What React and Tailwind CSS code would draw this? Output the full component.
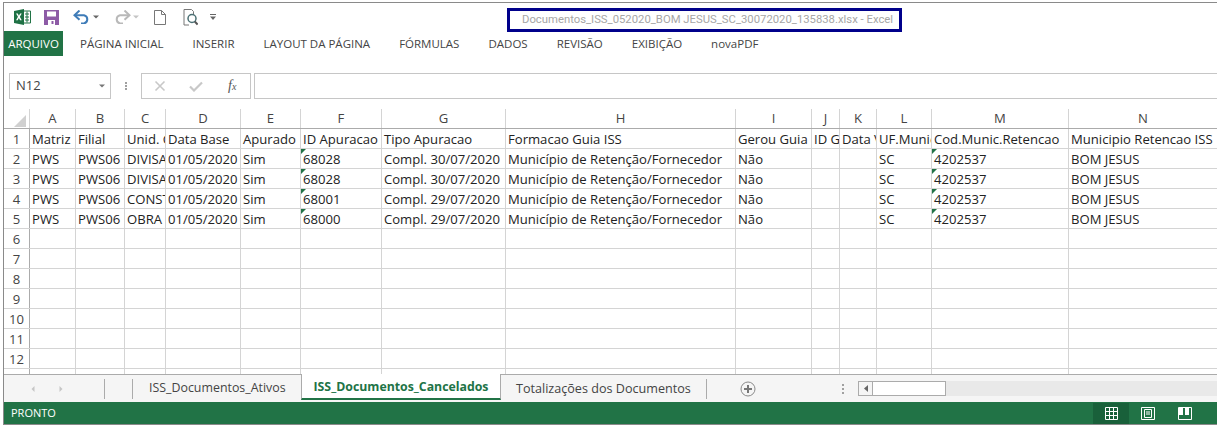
import React from 'react';

const columns = [
  { name: 'A', width: 'w-[46px]' },
  { name: 'B', width: 'w-[49px]' },
  { name: 'C', width: 'w-[41px]' },
  { name: 'D', width: 'w-[75px]' },
  { name: 'E', width: 'w-[60px]' },
  { name: 'F', width: 'w-[81px]' },
  { name: 'G', width: 'w-[124px]' },
  { name: 'H', width: 'w-[230px]' },
  { name: 'I', width: 'w-[76px]' },
  { name: 'J', width: 'w-[28px]' },
  { name: 'K', width: 'w-[37px]' },
  { name: 'L', width: 'w-[55px]' },
  { name: 'M', width: 'w-[137px]' },
  { name: 'N', width: 'w-[149px]' },
];

const common = ['PWS', 'PWS06'];
const tail = ['', '', 'SC', '4202537', 'BOM JESUS'];
const mun = 'Município de Retenção/Fornecedor';

const rows = [
  ['Matriz', 'Filial', 'Unid. Gestora', 'Data Base', 'Apurado', 'ID Apuracao', 'Tipo Apuracao', 'Formacao Guia ISS', 'Gerou Guia', 'ID Guia', 'Data Venc', 'UF.Munic', 'Cod.Munic.Retencao', 'Municipio Retencao ISS'],
  [...common, 'DIVISAO', '01/05/2020', 'Sim', '68028', 'Compl. 30/07/2020', mun, 'Não', ...tail],
  [...common, 'DIVISAO', '01/05/2020', 'Sim', '68028', 'Compl. 30/07/2020', mun, 'Não', ...tail],
  [...common, 'CONSTRU', '01/05/2020', 'Sim', '68001', 'Compl. 29/07/2020', mun, 'Não', ...tail],
  [...common, 'OBRA', '01/05/2020', 'Sim', '68000', 'Compl. 29/07/2020', mun, 'Não', ...tail],
  [], [], [], [], [], [], [], [],
];

const ribbonTabs = ['PÁGINA INICIAL', 'INSERIR', 'LAYOUT DA PÁGINA', 'FÓRMULAS', 'DADOS', 'REVISÃO', 'EXIBIÇÃO', 'novaPDF'];

const Chevron = ({ className }) => (
  <svg width="6" height="4" viewBox="0 0 6 4" className={className}>
    <path d="M0 0.5h6L3 3.5z" fill="currentColor" />
  </svg>
);

const QuickAccess = () => (
  <div className="flex items-center h-[28px] pl-[10px] shrink-0">
    <svg width="17" height="16" viewBox="0 0 17 16">
      <path d="M9 2h7.5v12H9z" fill="#fff" stroke="#217346" strokeWidth="1" />
      <path d="M11 5h4M11 8h4M11 11h4M13 2.5v11" stroke="#217346" strokeWidth="1" />
      <path d="M0 2l10-2v16L0 14z" fill="#1e7145" />
      <path d="M3 4.5h1.8L6 7l1.2-2.5H9L7 8l2 3.5H7.2L6 9.2 4.8 11.5H3L5 8z" fill="#fff" transform="translate(-0.8 0.2) scale(0.95)" />
    </svg>
    <svg width="15" height="15" viewBox="0 0 15 15" className="ml-[13px]">
      <path d="M0 0h15v15H0z" fill="#8d5ba6" />
      <path d="M3 1.5h9v5H3zM4 10h7v5H4z" fill="#fff" />
      <path d="M7.5 11h2v3h-2z" fill="#8d5ba6" />
    </svg>
    <svg width="18" height="14" viewBox="0 0 18 14" className="ml-[14px]" fill="none">
      <path d="M2 5.2h9a4.2 4.2 0 0 1 0 8.2H8" stroke="#3f7cb8" strokeWidth="2" />
      <path d="M6.5 0.5L1.5 5.2l5 4.6" stroke="#3f7cb8" strokeWidth="2" />
    </svg>
    <Chevron className="ml-[2px] text-[#666]" />
    <svg width="18" height="14" viewBox="0 0 18 14" className="ml-[14px]" fill="none">
      <path d="M16 5.2H7a4.2 4.2 0 0 0 0 8.2h3" stroke="#b9b9b9" strokeWidth="2" />
      <path d="M11.5 0.5l5 4.7-5 4.6" stroke="#b9b9b9" strokeWidth="2" />
    </svg>
    <Chevron className="ml-[2px] text-[#c4c4c4]" />
    <svg width="12" height="15" viewBox="0 0 12 15" className="ml-[15px]" fill="none">
      <path d="M.5.5h7l4 4v10H.5zM7.5.5v4h4" stroke="#777" />
    </svg>
    <svg width="15" height="17" viewBox="0 0 15 17" className="ml-[17px]" fill="none">
      <path d="M5 .5H1v15.5h5M5 .5h3.5l2 2V5" stroke="#777" />
      <circle cx="9" cy="9.5" r="4" stroke="#4a6f73" strokeWidth="1.5" />
      <path d="M11.8 12.5l2.8 3" stroke="#555" strokeWidth="2" />
    </svg>
    <svg width="6" height="6" viewBox="0 0 6 6" className="ml-[12px]">
      <path d="M0 0h6v1H0zM0 2.5h6L3 6z" fill="#666" />
    </svg>
  </div>
);

const TitleBar = () => (
  <div className="flex h-[29px] shrink-0">
    <QuickAccess />
    <div
      className="ml-[291px] mt-[5px] w-[395px] h-[24px] border-[3px] border-[#00008b] pl-[12px] text-[11.3px] leading-[17px] text-[#a6a6a6] whitespace-nowrap"
      style={{ fontFamily: 'Roboto, sans-serif' }}
    >
      Documentos_ISS_052020_BOM JESUS_SC_30072020_135838.xlsx - Excel
    </div>
  </div>
);

const Ribbon = () => (
  <div className="flex items-center h-[25px] mt-[-1px] text-[11.5px] text-[#444]">
    <div className="w-[59px] h-[25px] bg-[#217346] text-white flex items-center justify-center">ARQUIVO</div>
    <div className="flex gap-[29px] ml-[17px]">
      {ribbonTabs.map((tab) => (
        <span key={tab}>{tab}</span>
      ))}
    </div>
  </div>
);

const FormulaBar = () => (
  <div className="flex items-center h-[26px] mt-[17px] pl-[5px]">
    <div className="flex items-center justify-between w-[102px] h-[26px] border border-[#c6c6c6] pl-[6px] pr-[5px] text-[13px] text-[#444]">
      N12
      <Chevron className="text-[#777]" />
    </div>
    <div className="flex flex-col gap-[1px] w-[30px] items-center">
      <span className="w-[2px] h-[2px] bg-[#a0a0a0]" />
      <span className="w-[2px] h-[2px] bg-[#a0a0a0]" />
      <span className="w-[2px] h-[2px] bg-[#a0a0a0]" />
    </div>
    <div className="flex items-center w-[110px] h-[26px] border border-[#c6c6c6] pl-[12px]">
      <svg width="12" height="12" viewBox="0 0 12 12" fill="none">
        <path d="M1.5 1.5l9 9M10.5 1.5l-9 9" stroke="#c8c8c8" strokeWidth="1.6" />
      </svg>
      <svg width="14" height="12" viewBox="0 0 14 12" fill="none" className="ml-[23px]">
        <path d="M1 6.5l4 4 8-8" stroke="#c8c8c8" strokeWidth="2.2" />
      </svg>
      <span className="ml-[25px] text-[14px] leading-none italic text-[#555]" style={{ fontFamily: '"Liberation Serif", serif' }}>
        f<span className="text-[10px]">x</span>
      </span>
    </div>
    <div className="flex-1 h-[26px] ml-[3px] border border-[#c6c6c6] border-r-0" />
  </div>
);

const Sheet = () => (
  <div className="mt-[10px] text-[13.1px] text-[#222] h-[265px] shrink-0 overflow-hidden">
    <div className="flex h-[20px] text-[#444] border-b border-[#ababab]">
      <div className="w-[26px] shrink-0 border-r border-[#d4d4d4] flex justify-end items-end pr-[3px]">
        <div className="w-0 h-0 border-l-[12px] border-l-transparent border-b-[12px] border-b-[#d0d0d0] mb-[1px]" />
      </div>
      {columns.map((col) => (
        <div key={col.name} className={`${col.width} shrink-0 border-r border-[#d4d4d4] text-center leading-[19px]`}>
          {col.name}
        </div>
      ))}
    </div>
    {rows.map((row, r) => (
      <div key={r} className="flex h-[20px] border-b border-[#d4d4d4]">
        <div className="w-[26px] shrink-0 border-r border-[#ababab] text-center leading-[20px] text-[#444]">{r < 12 ? r + 1 : ''}</div>
        {columns.map((col, c) => (
          <div key={col.name} className={`relative ${col.width} shrink-0 border-r border-[#d4d4d4] overflow-hidden whitespace-nowrap pl-[2px] leading-[20px]`}>
            {r > 0 && r < 5 && (c === 5 || c === 12) && (
              <span className="absolute left-0 top-0 w-0 h-0 border-t-[5px] border-t-[#217346] border-r-[5px] border-r-transparent" />
            )}
            {row[c]}
          </div>
        ))}
      </div>
    ))}
  </div>
);

const TabStrip = () => (
  <div className="flex items-center h-[28px] shrink-0 bg-[#f5f5f5] border-t border-[#ababab] text-[12.4px] text-[#444]">
    <div className="flex items-center h-full w-[129px] shrink-0 pl-[26px]">
      <Chevron className="rotate-90 text-[#c6c6c6]" />
      <Chevron className="-rotate-90 ml-[22px] text-[#c6c6c6]" />
      <span className="w-px h-[20px] bg-[#ababab] ml-[40px]" />
      <span className="w-px h-[20px] bg-[#ababab] ml-[27px]" />
    </div>
    <div className="w-[168px] shrink-0 pl-[16px] whitespace-nowrap">ISS_Documentos_Ativos</div>
    <div className="w-[200px] h-[26px] self-start shrink-0 bg-white border-x border-[#ababab] border-b-2 border-b-[#217346] mt-[-1px] font-bold text-[12.3px] text-[#217346] text-center leading-[25px] whitespace-nowrap">
      ISS_Documentos_Cancelados
    </div>
    <div className="w-[206px] shrink-0 border-r border-[#ababab] h-[20px] pl-[15px] leading-[20px] text-[12.6px] whitespace-nowrap">Totalizações dos Documentos</div>
    <svg width="16" height="16" viewBox="0 0 16 16" fill="none" className="ml-[33px] shrink-0">
      <circle cx="8" cy="8" r="7" stroke="#8a8a8a" />
      <path d="M8 4v8M4 8h8" stroke="#777" strokeWidth="2" />
    </svg>
    <div className="flex flex-col gap-[2px] ml-[86px] shrink-0">
      <span className="w-[2px] h-[2px] bg-[#a0a0a0]" />
      <span className="w-[2px] h-[2px] bg-[#a0a0a0]" />
      <span className="w-[2px] h-[2px] bg-[#a0a0a0]" />
    </div>
    <div className="flex flex-1 h-[15px] ml-[14px] bg-[#e9e9e9]">
      <div className="flex items-center justify-center w-[15px] border border-[#ababab] bg-[#f5f5f5]">
        <svg width="4" height="7" viewBox="0 0 4 7"><path d="M4 0v7L0 3.5z" fill="#666" /></svg>
      </div>
      <div className="w-[73px] border border-l-0 border-[#ababab] bg-white" />
    </div>
  </div>
);

const StatusBar = () => (
  <div className="flex items-center justify-between h-[22px] shrink-0 bg-[#217346] text-white text-[11px]">
    <span className="pl-[7px]">PRONTO</span>
    <div className="flex h-full items-center pt-px">
      <div className="flex items-center justify-center w-[36px] h-[21px] bg-[#19603a]">
        <svg width="13" height="13" viewBox="0 0 13 13" fill="none" stroke="#fff">
          <path d="M.5.5h12v12H.5zM4.5.5v12M8.5.5v12M.5 4.5h12M.5 8.5h12" />
        </svg>
      </div>
      <div className="flex items-center justify-center w-[37px]">
        <svg width="14" height="13" viewBox="0 0 14 13" fill="none" stroke="#fff">
          <path d="M.5.5h13v12H.5zM3.5 2.5h7v8h-7zM5 5h4M5 7h4" />
        </svg>
      </div>
      <div className="flex items-center justify-center w-[37px] mr-[14px]">
        <svg width="14" height="13" viewBox="0 0 14 13" fill="none">
          <path d="M.5.5h13v12H.5z" stroke="#fff" />
          <path d="M1 1h4v7H1zM7 1h4v7H7z" fill="#fff" />
        </svg>
      </div>
    </div>
  </div>
);

const App = () => {
  return (
    <div className="w-[1217px] h-[426px] bg-white pt-[2px] pl-[3px] overflow-hidden" style={{ fontFamily: '"Open Sans", sans-serif' }}>
      <div className="flex flex-col h-[423px] border-l border-t border-b border-[#8a8a8a]">
        <TitleBar />
        <Ribbon />
        <FormulaBar />
        <Sheet />
        <TabStrip />
        <StatusBar />
      </div>
    </div>
  );
};

export default App;
